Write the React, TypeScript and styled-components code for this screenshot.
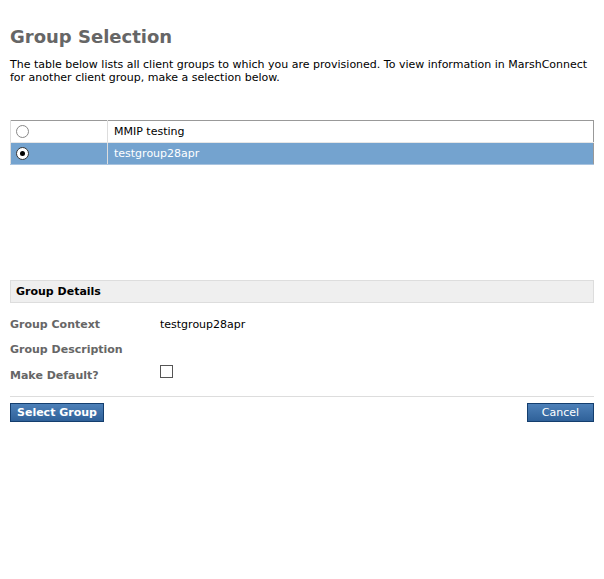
import React, { useState } from "react";
import styled, { createGlobalStyle } from "styled-components";

const Global = createGlobalStyle`
  html, body { margin: 0; padding: 0; background: #fff; }
  body { font-family: "DejaVu Sans", Verdana, sans-serif; font-size: 11px; color: #000; }
`;

const Page = styled.div`
  width: 584px;
  padding: 25px 10px 0 10px;
`;

const Title = styled.h1`
  margin: 0;
  font-size: 18px;
  line-height: 24px;
  font-weight: bold;
  color: #666;
`;

const Intro = styled.p`
  margin: 9px 0 0 0;
  line-height: 13px;
  color: #000;
`;

const GroupTable = styled.table`
  margin-top: 36px;
  width: 100%;
  border-collapse: collapse;
  border: 1px solid #999;
`;

const Row = styled.tr<{ $selected?: boolean }>`
  background: ${(p) => (p.$selected ? "#74a3cf" : "#fff")};
  color: ${(p) => (p.$selected ? "#fff" : "#000")};
  cursor: pointer;
  & > td { border-bottom: 1px solid ${(p) => (p.$selected ? "#a8c3df" : "#e6e6e6")}; }
`;

const RadioCell = styled.td`
  width: 91px;
  height: 21px;
  padding: 0 0 0 5px;
  border-right: 1px solid #ddd;
  border-left: 1px solid #ddd;
  vertical-align: middle;
`;

const NameCell = styled.td`
  padding: 0 0 0 6px;
  height: 21px;
  vertical-align: middle;
`;

const Radio = styled.span<{ $checked?: boolean }>`
  display: block;
  width: 11px;
  height: 11px;
  border-radius: 50%;
  border: 1px solid ${(p) => (p.$checked ? "#333" : "#888")};
  background: #fff;
  position: relative;
  &::after {
    content: "";
    display: ${(p) => (p.$checked ? "block" : "none")};
    position: absolute;
    left: 3px;
    top: 3px;
    width: 5px;
    height: 5px;
    border-radius: 50%;
    background: #000;
  }
`;

const SectionHeader = styled.div`
  margin-top: 115px;
  height: 21px;
  line-height: 21px;
  background: #efefef;
  border: 1px solid #ddd;
  padding-left: 5px;
  font-weight: bold;
  color: #000;
`;

const Details = styled.div`
  display: grid;
  grid-template-columns: 150px 1fr;
  grid-template-rows: 25px 25px 27px;
  margin-top: 9px;
  align-items: center;
`;

const Label = styled.div`
  font-weight: bold;
  color: #666;
`;

const Value = styled.div<{ $top?: boolean }>`
  color: #000;
  align-self: ${(p) => (p.$top ? "start" : "center")};
`;

const Check = styled.span`
  display: block;
  width: 11px;
  height: 11px;
  border: 1px solid #555;
  background: #fff;
  margin-top: 3px;
  cursor: pointer;
`;

const Divider = styled.hr`
  margin: 7px 0 0 0;
  border: 0;
  border-top: 1px solid #ddd;
`;

const Buttons = styled.div`
  display: flex;
  justify-content: space-between;
  margin-top: 6px;
`;

const Button = styled.button<{ $bold?: boolean }>`
  height: 19px;
  padding: 0 ${(p) => (p.$bold ? "6px" : "14px")};
  font-family: "DejaVu Sans", Verdana, sans-serif;
  font-size: 11px;
  font-weight: ${(p) => (p.$bold ? "bold" : "normal")};
  color: #fff;
  background: linear-gradient(#4d80b8, #2f6199);
  border: 1px solid #143e6e;
  border-radius: 0;
  cursor: pointer;
  line-height: 17px;
`;

const groups = ["MMIP testing", "testgroup28apr"];

export default function App() {
  const [sel, setSel] = useState(1);
  const [def, setDef] = useState(false);
  return (
    <Page>
      <Global />
      <Title>Group Selection</Title>
      <Intro>
        The table below lists all client groups to which you are provisioned. To view information in MarshConnect
        for another client group, make a selection below.
      </Intro>
      <GroupTable>
        <tbody>
          {groups.map((g, i) => (
            <Row key={g} $selected={i === sel} onClick={() => setSel(i)}>
              <RadioCell>
                <Radio $checked={i === sel} />
              </RadioCell>
              <NameCell>{g}</NameCell>
            </Row>
          ))}
        </tbody>
      </GroupTable>
      <SectionHeader>Group Details</SectionHeader>
      <Details>
        <Label>Group Context</Label>
        <Value>{groups[sel]}</Value>
        <Label>Group Description</Label>
        <Value />
        <Label>Make Default?</Label>
        <Value $top>
          <Check onClick={() => setDef(!def)} />
        </Value>
      </Details>
      <Divider />
      <Buttons>
        <Button $bold>Select Group</Button>
        <Button>Cancel</Button>
      </Buttons>
    </Page>
  );
}
